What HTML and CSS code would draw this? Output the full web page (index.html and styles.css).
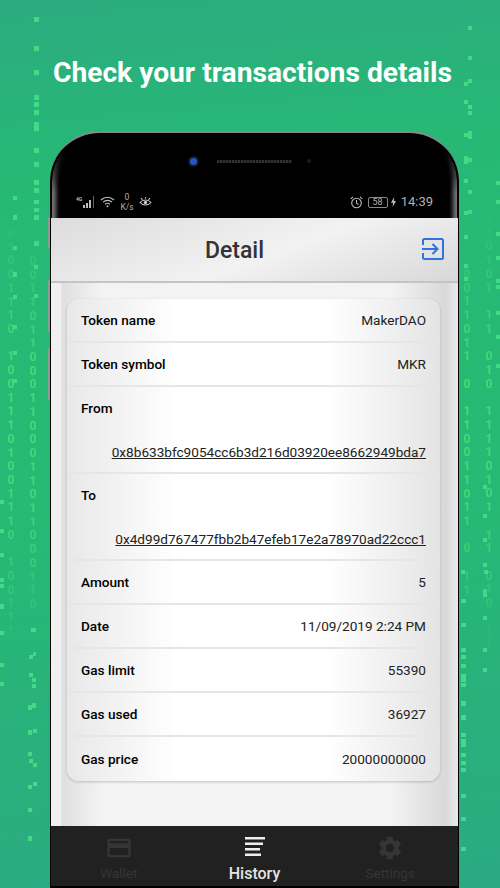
FILE: index.html
```html
<!DOCTYPE html>
<html lang="en">
<head>
    <meta charset="UTF-8">
    <title>Check your transactions details</title>
    <link rel="stylesheet" href="styles.css">
</head>
<body>
    <!-- matrix rain behind the phone -->
    <svg class="rain" width="500" height="888" viewBox="0 0 500 888">
        <path class="drops" d="M34 17h5v5h-5zM34 46h5v5h-5zM34 70h5v5h-5zM34 95h5v5h-5zM34 102h5v5h-5zM34 110h5v5h-5zM34 122h5v4h-5zM34 126h5v5h-5zM34 148h5v5h-5zM34 162h5v5h-5zM34 180h5v5h-5zM34 188h5v5h-5zM34 200h5v4h-5zM34 208h5v4h-5zM34 215h5v5h-5zM34 241h5v5h-5zM13 196h4v4h-4zM13 215h4v5h-4zM13 246h4v4h-4zM13 272h4v5h-4zM13 295h4v4h-4zM13 325h4v4h-4zM13 351h4v4h-4zM13 379h4v4h-4zM34 265h4v4h-4zM34 294h4v4h-4zM0 500h4v4h-4zM0 529h4v4h-4zM0 553h4v4h-4zM0 578h4v4h-4zM0 584h4v4h-4zM0 604h4v5h-4zM0 631h4v4h-4zM0 663h4v4h-4zM0 682h4v4h-4zM31 628h5v4h-5zM33 652h3v4h-3zM29 655h4v4h-4zM29 673h4v4h-4zM32 678h4v4h-4zM32 684h4v4h-4zM28 705h4v5h-4zM32 703h4v5h-4zM28 730h4v5h-4zM33 729h4v4h-4zM28 752h4v4h-4zM29 759h4v4h-4zM33 763h4v4h-4zM28 785h4v4h-4zM33 782h4v4h-4zM28 808h4v4h-4zM28 836h4v5h-4zM468 26h4v4h-4zM468 56h4v4h-4zM468 79h4v4h-4zM464 82h4v4h-4zM464 100h4v4h-4zM468 105h4v4h-4zM468 111h4v4h-4zM464 133h4v4h-4zM468 131h4v4h-4zM468 135h4v4h-4zM464 156h4v4h-4zM464 160h4v4h-4zM468 158h4v4h-4zM464 179h4v4h-4zM468 190h4v4h-4zM468 210h4v4h-4zM464 211h4v4h-4zM464 235h4v4h-4zM464 264h4v4h-4zM464 277h4v4h-4zM496 181h4v4h-4zM496 200h4v4h-4zM496 232h4v4h-4zM496 256h4v4h-4zM496 279h4v4h-4zM496 285h4v4h-4zM496 311h4v4h-4zM496 335h4v4h-4zM496 364h4v4h-4zM483 485h4v4h-4zM483 514h4v4h-4zM483 538h4v4h-4zM483 563h4v4h-4zM484 570h4v4h-4zM461 570h4v4h-4zM461 599h5v4h-5zM461 623h5v4h-5zM461 648h5v4h-5zM461 655h5v4h-5zM461 664h5v4h-5zM461 674h5v4h-5zM461 678h5v4h-5zM461 683h5v4h-5zM461 701h5v5h-5zM461 715h5v5h-5zM461 733h5v4h-5zM461 739h5v4h-5zM461 743h5v4h-5zM461 753h5v4h-5zM461 761h5v4h-5zM461 768h5v4h-5zM461 794h5v4h-5zM461 817h5v4h-5zM461 847h5v4h-5zM483 589h4v4h-4zM483 593h4v4h-4zM483 616h4v4h-4zM483 648h4v4h-4zM483 668h4v4h-4z"/>
    </svg>
    <div class="digits">
        <div class="digit-col col-left-a">0
1
0
0
1
1
1
0

1
0
0
1
1
1
0
1
0
0
1
1
1
0

1
0
0
1
1
1</div>
        <div class="digit-col col-left-b">0
0
1
1
0
1
1
0
0
0
1
1
0
0
0
1
1
0
1
1
0
0
0
1
1
0</div>
        <div class="digit-col col-right-a">0
0
1
1
0
1
1

0

1
1
0
0
1
1
0
1
1

0

1
1</div>
        <div class="digit-col col-right-b">1
1
0
1
0
1

1
1

0
1
0

1
1
1
1
0
1
0
1

1
1

0
1
0

1
1</div>
    </div>

    <h1 class="headline">Check your transactions details</h1>

    <div class="phone">
        <span class="side-key side-key-a"></span>
        <span class="side-key side-key-b"></span>
        <span class="side-key side-key-c"></span>

        <div class="bezel">
            <div class="sensors">
                <span class="camera"></span>
                <span class="speaker"></span>
                <span class="sensor-dot"></span>
            </div>
            <div class="status-bar">
                <div class="status-group">
                    <svg class="ico-signal" width="20" height="14" viewBox="0 0 20 14">
                        <text x="0" y="6" class="net-label">4G</text>
                        <path d="M7 10h2v3H7zM10 8h2v5h-2zM13 5h2v8h-2z" fill="#bbb"/>
                        <path d="M17 1h1v12h-1z" fill="#666"/>
                    </svg>
                    <svg class="ico-wifi" width="15" height="12" viewBox="0 0 15 12" fill="none" stroke="#bbb" stroke-width="1.1">
                        <path d="M1 4c3.700-3.600 9.300-3.600 13 0M3 6.200c2.600-2.400 6.400-2.400 9 0M5 8.200c1.500-1.200 3.500-1.200 5 0"/>
                        <circle cx="7.500" cy="10.300" r="1" fill="#bbb" stroke="none"/>
                    </svg>
                    <div class="speed"><span>0</span><span>K/s</span></div>
                    <svg class="ico-eye" width="13" height="11" viewBox="0 0 13 11" fill="none" stroke="#ccc" stroke-width="1.1">
                        <path d="M1 5.500c3-3.400 8-3.400 11 0c-3 3.400-8 3.400-11 0z"/>
                        <circle cx="6.500" cy="5.500" r="1.700" fill="#ccc" stroke="none"/>
                        <path d="M2 1l1.500 1.800M11 1L9.500 2.800M6.500 0v1.500"/>
                    </svg>
                </div>
                <div class="status-group status-right">
                    <svg class="ico-alarm" width="13" height="13" viewBox="0 0 13 13" fill="none" stroke="#bbb" stroke-width="1.1">
                        <circle cx="6.500" cy="7" r="4.800"/>
                        <path d="M6.500 4v3.200l2 1.400M.8 2.800L3 .8M12.200 2.800L10 .8"/>
                    </svg>
                    <div class="battery">58</div>
                    <svg class="ico-bolt" width="5" height="10" viewBox="0 0 5 10"><path d="M3.200 0L0 5.800h2L1.600 10 5 4H3z" fill="#bbb"/></svg>
                    <span class="clock">14:39</span>
                </div>
            </div>
        </div>

        <div class="screen">
            <header class="app-bar">
                <h2 class="app-title">Detail</h2>
                <svg class="ico-exit" width="24" height="24" viewBox="0 0 24 24" fill="none" stroke="#2f73e0" stroke-width="2">
                    <path d="M2 8V3.500C2 2.600 2.600 2 3.500 2h17c.9 0 1.500.6 1.500 1.500v17c0 .9-.6 1.500-1.500 1.500h-17C2.600 22 2 21.400 2 20.500V16"/>
                    <path d="M1 12h15M11.500 7l5 5-5 5"/>
                </svg>
            </header>

            <main class="content">
                <section class="card">
                    <div class="row"><span class="label">Token name</span><span>MakerDAO</span></div>
                    <div class="row"><span class="label">Token symbol</span><span>MKR</span></div>
                    <div class="row row-tall">
                        <span class="label">From</span>
                        <a class="address">0x8b633bfc9054cc6b3d216d03920ee8662949bda7</a>
                    </div>
                    <div class="row row-tall">
                        <span class="label">To</span>
                        <a class="address">0x4d99d767477fbb2b47efeb17e2a78970ad22ccc1</a>
                    </div>
                    <div class="row"><span class="label">Amount</span><span>5</span></div>
                    <div class="row"><span class="label">Date</span><span>11/09/2019 2:24 PM</span></div>
                    <div class="row"><span class="label">Gas limit</span><span>55390</span></div>
                    <div class="row"><span class="label">Gas used</span><span>36927</span></div>
                    <div class="row"><span class="label">Gas price</span><span>20000000000</span></div>
                </section>
            </main>

            <nav class="tabs">
                <div class="tab">
                    <svg width="28" height="28" viewBox="0 0 24 24" fill="#353535"><path d="M20 4H4c-1.100 0-2 .9-2 2v12c0 1.100.9 2 2 2h16c1.100 0 2-.9 2-2V6c0-1.100-.9-2-2-2zm0 14H4v-6h16v6zm0-10H4V6h16v2z"/></svg>
                    <span>Wallet</span>
                </div>
                <div class="tab tab-active">
                    <svg width="28" height="28" viewBox="0 0 28 28" fill="#eee"><path d="M4 3h20v2.500H4zM4 8.500h18v2.500H4zM4 14h15v2.500H4zM4 19.500h16v2.500H4z"/></svg>
                    <span>History</span>
                </div>
                <div class="tab">
                    <svg width="28" height="28" viewBox="0 0 24 24" fill="#353535"><path d="M19.140 12.940c.04-.3.06-.61.06-.94 0-.32-.02-.64-.07-.94l2.030-1.580c.18-.14.23-.41.12-.61l-1.920-3.320c-.12-.22-.37-.29-.59-.22l-2.390.96c-.5-.38-1.030-.7-1.620-.94l-.36-2.540c-.04-.24-.24-.41-.48-.41h-3.840c-.24 0-.43.17-.47.41l-.36 2.540c-.59.24-1.130.57-1.620.94l-2.390-.96c-.22-.08-.47 0-.59.22L2.740 8.870c-.12.21-.08.47.12.61l2.030 1.580c-.05.3-.09.63-.09.94s.02.64.07.94l-2.030 1.580c-.18.14-.23.41-.12.61l1.920 3.320c.12.22.37.29.59.22l2.390-.96c.5.38 1.030.7 1.620.94l.36 2.540c.05.24.24.41.48.41h3.840c.24 0 .44-.17.47-.41l.36-2.540c.59-.24 1.130-.56 1.620-.94l2.390.96c.22.08.47 0 .59-.22l1.920-3.320c.12-.22.07-.47-.12-.61l-2.010-1.580zM12 15.600c-1.980 0-3.600-1.620-3.600-3.600s1.620-3.600 3.600-3.600 3.600 1.620 3.600 3.600-1.620 3.600-3.600 3.600z"/></svg>
                    <span>Settings</span>
                </div>
            </nav>
        </div>
    </div>
</body>
</html>
```

FILE: styles.css
```css
* {
    box-sizing: border-box;
}
html, body {
    height: 888px;
}
body {
    margin: 0;
    overflow: hidden;
    position: relative;
    font-family: Roboto, sans-serif;
    color: #222;
    background: linear-gradient(175deg, #2cab80 0%, #27b876 18%, #26ba74 55%, #2ba982 100%);
}
.rain {
    position: absolute;
    left: 0;
    top: 0;
}
.drops {
    fill: #47e58a;
    opacity: 0.8;
}
.digits {
    position: absolute;
    left: 0;
    top: 0;
    width: 500px;
    height: 888px;
    -webkit-mask-image: linear-gradient(180deg, rgba(0,0,0,0.1) 220px, rgba(0,0,0,0.75) 370px, rgba(0,0,0,0.7) 490px, rgba(0,0,0,0.05) 660px);
    mask-image: linear-gradient(180deg, rgba(0,0,0,0.1) 220px, rgba(0,0,0,0.75) 370px, rgba(0,0,0,0.7) 490px, rgba(0,0,0,0.05) 660px);
}
.digit-col {
    position: absolute;
    width: 8px;
    white-space: pre;
    font-size: 12px;
    font-weight: 700;
    line-height: 13.72px;
    text-align: center;
    color: #4be87a;
}
.col-left-a {
    left: 7px;
    top: 227px;
}
.col-left-b {
    left: 29px;
    top: 255px;
}
.col-right-a {
    left: 463px;
    top: 268px;
}
.col-right-b {
    left: 485px;
    top: 213px;
}
.headline {
    position: relative;
    margin: 0;
    padding: 55px 0 0 5px;
    height: 131px;
    font-size: 28.2px;
    font-weight: 700;
    line-height: 36px;
    color: #fff;
    text-align: center;
}

/* phone */
.phone {
    position: relative;
    width: 409px;
    height: 757px;
    margin-left: 50px;
    background: #000;
    border-top: 2px solid #8a8a8a;
    border-radius: 50px 50px 0 0;
}
.side-key {
    position: absolute;
    left: -2px;
    width: 2px;
    background: #8f9a94;
}
.side-key-a {
    top: 85px;
    height: 30px;
}
.side-key-b {
    top: 147px;
    height: 52px;
}
.side-key-c {
    top: 215px;
    height: 52px;
}
.bezel {
    position: relative;
    height: 85px;
    margin: 0 2px;
    padding-top: 20px;
    border-radius: 48px 48px 0 0;
}
/* glossy edge, only lower down the curve */
.bezel::before {
    content: "";
    position: absolute;
    inset: 0;
    border-radius: 48px 48px 0 0;
    box-shadow: inset 9px 0 4px -5px #777, inset -9px 0 4px -5px #777;
    -webkit-mask-image: linear-gradient(180deg, transparent 18px, #000 60px);
    mask-image: linear-gradient(180deg, transparent 18px, #000 60px);
}
.sensors {
    display: flex;
    align-items: center;
    height: 16px;
    padding-left: 138px;
}
.camera {
    width: 7px;
    height: 7px;
    border-radius: 50%;
    background: #2a55c0;
    box-shadow: 0 0 0 2px #121a2a;
}
.speaker {
    width: 75px;
    height: 3px;
    margin-left: 20px;
    background: repeating-linear-gradient(90deg, #333 0 2px, #111 2px 3px);
}
.sensor-dot {
    width: 4px;
    height: 4px;
    margin-left: 15px;
    border-radius: 50%;
    background: #1c1c1c;
}
.status-bar {
    position: relative;
    display: flex;
    justify-content: space-between;
    align-items: center;
    height: 24px;
    margin-top: 21px;
    padding: 0 24px 0 24px;
    color: #b0b0b0;
}
.status-group {
    display: flex;
    align-items: center;
    gap: 4px;
}
.status-right {
    gap: 3px;
}
.net-label {
    font-size: 5px;
    font-weight: 700;
    fill: #bbb;
}
.speed {
    display: flex;
    flex-direction: column;
    align-items: center;
    width: 14px;
    margin: 0 1px 0 1px;
    font-size: 8.500px;
    line-height: 10px;
}
.battery {
    width: 20px;
    height: 11px;
    margin-left: 2px;
    border: 1px solid #888;
    border-radius: 2px;
    font-size: 9px;
    line-height: 9px;
    text-align: center;
}
.clock {
    margin-left: 2px;
    font-size: 13px;
    line-height: 16px;
}

/* app screen */
.screen {
    display: flex;
    flex-direction: column;
    height: 668px;
    margin: 0 1px 0 1px;
    background: linear-gradient(90deg, #f0f0f0 0, #f0f0f0 10px, #dfdfdf 11px, #f3f3f3 50px, #f3f3f3 340px, #d9d9d9 395px, #e9e9e9 406px);
}
.app-bar {
    position: relative;
    display: flex;
    justify-content: center;
    align-items: center;
    flex: none;
    height: 65px;
    padding: 2px 40px 0 0;
    border-bottom: 2px solid #c4c4c4;
    background: linear-gradient(160deg, #dcdcdc 0%, #f2f2f2 55%, #d8d8d8 100%);
}
.app-title {
    margin: 0;
    font-size: 23px;
    font-weight: 500;
    color: #333;
}
.ico-exit {
    position: absolute;
    right: 13px;
    top: 19px;
}
.content {
    flex: 1;
    padding: 16px 18px 0 16px;
}
.card {
    overflow: hidden;
    border-radius: 12px;
    background: linear-gradient(90deg, #e8e8e8 0, #fff 110px, #fff 260px, #e4e4e4 373px);
    box-shadow: 0 1px 3px rgba(0, 0, 0, 0.2);
}
.row {
    display: flex;
    justify-content: space-between;
    align-items: center;
    height: 44px;
    padding: 1px 14px 0;
    border-bottom: 2px solid #e6e6e6;
    font-size: 13.6px;
    line-height: 17px;
    color: #222;
}
.row:last-child {
    border-bottom: 0;
}
.row-tall {
    display: block;
    height: 87px;
    padding-top: 13px;
}
.label {
    font-weight: 500;
    color: #000;
}
.address {
    display: block;
    margin-top: 27px;
    text-align: right;
    text-decoration: underline;
    color: #222;
}

/* bottom tabs */
.tabs {
    display: flex;
    flex: none;
    height: 60px;
    background: #212121;
}
.tab {
    display: flex;
    flex: 1;
    flex-direction: column;
    align-items: center;
    padding-top: 8px;
    font-size: 13.5px;
    line-height: 16px;
    color: #353535;
}
.tab span {
    margin-top: 3px;
}
.tab-active {
    font-size: 16px;
    font-weight: 500;
    color: #e4e4e4;
}
.tab-active span {
    margin-top: 4px;
}
```
